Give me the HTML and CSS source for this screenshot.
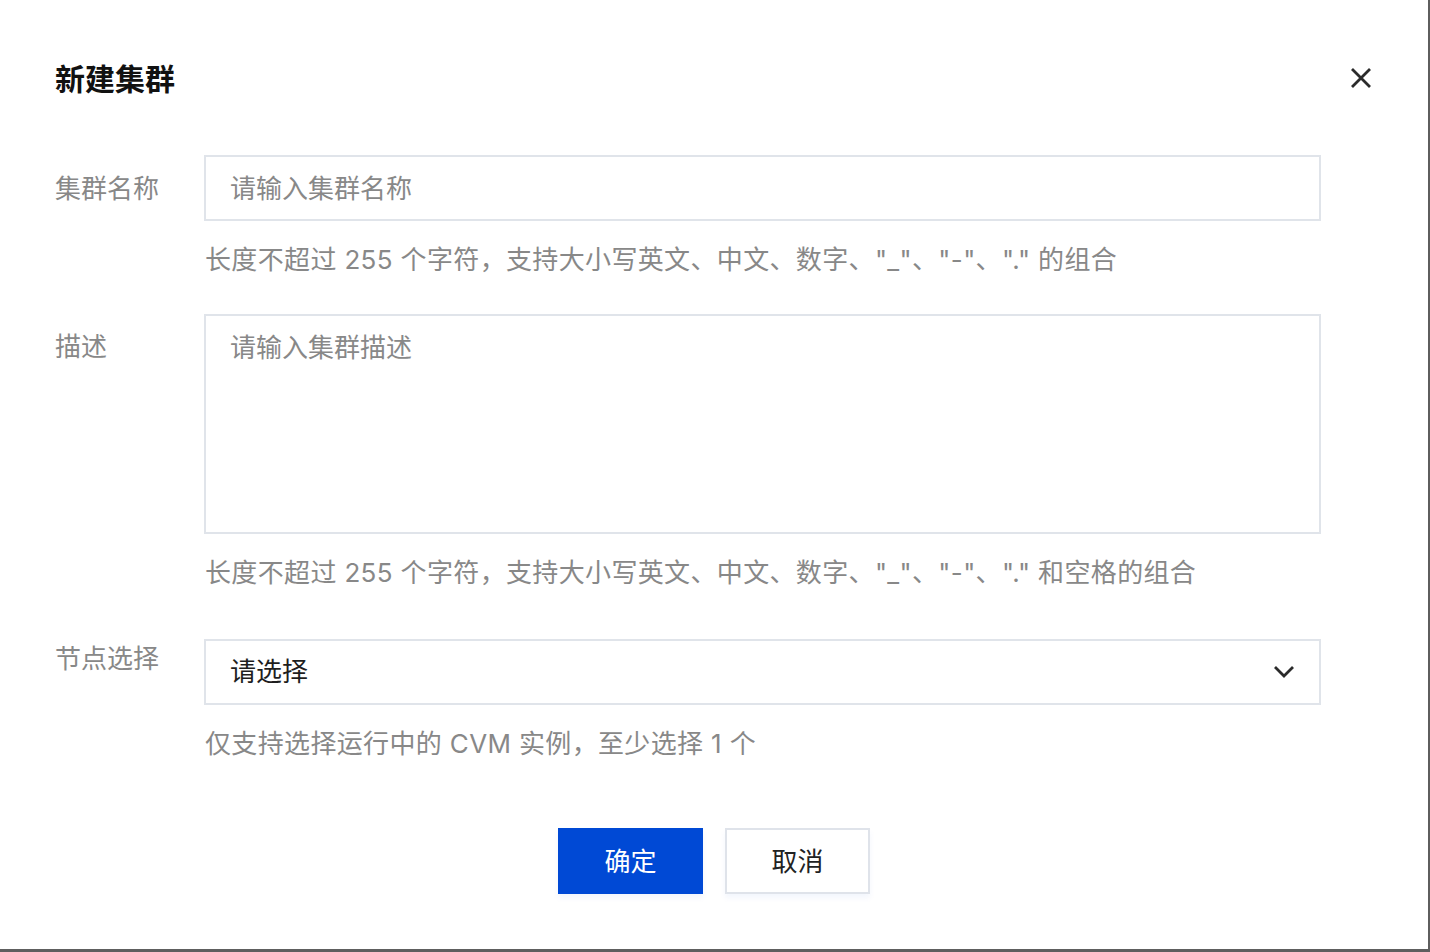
FILE: index.html
```html
<!DOCTYPE html>
<html lang="zh-CN">
<head>
    <meta charset="UTF-8">
    <meta name="viewport" content="width=device-width, initial-scale=1.0">
    <title>新建集群</title>
    <link rel="stylesheet" href="styles.css">
</head>
<body>
    <div class="dialog">
        <div class="dialog-header">
            <h1>新建集群</h1>
            <button class="close" type="button" aria-label="关闭">
                <svg width="22" height="22" viewBox="0 0 22 22">
                    <path d="M2 2 L20 20 M20 2 L2 20" stroke="#2b2b2b" stroke-width="2.8" fill="none"/>
                </svg>
            </button>
        </div>

        <form class="form">
            <label class="label" for="name">集群名称</label>
            <div class="field">
                <input type="text" id="name" class="input" placeholder="请输入集群名称">
                <p class="help">长度不超过 255 个字符，支持大小写英文、中文、数字、"_"、"-"、"." 的组合</p>
            </div>

            <label class="label label-desc" for="desc">描述</label>
            <div class="field field-desc">
                <textarea id="desc" class="textarea" placeholder="请输入集群描述"></textarea>
                <p class="help">长度不超过 255 个字符，支持大小写英文、中文、数字、"_"、"-"、"." 和空格的组合</p>
            </div>

            <label class="label label-node">节点选择</label>
            <div class="field field-node">
                <div class="select">
                    <span>请选择</span>
                    <svg width="22" height="16" viewBox="0 0 22 16">
                        <path d="M2 3 L11 12 L20 3" stroke="#2b2b2b" stroke-width="2.8" fill="none"/>
                    </svg>
                </div>
                <p class="help">仅支持选择运行中的 CVM 实例，至少选择 1 个</p>
            </div>
        </form>

        <div class="footer">
            <button type="button" class="btn btn-primary">确定</button>
            <button type="button" class="btn">取消</button>
        </div>
    </div>
</body>
</html>
```

FILE: styles.css
```css
body {
    margin: 0;
    padding: 0;
    background-color: #5e5e5e;
    font-family: Inter, "Noto Sans CJK SC", sans-serif;
}

.dialog {
    width: 1428px;
    height: 949px;
    box-sizing: border-box;
    padding: 57px 55px 0 55px;
    background-color: #fff;
}

.dialog-header {
    display: flex;
    align-items: center;
    justify-content: space-between;
    height: 44px;
    margin-bottom: 2px;
}

.dialog-header h1 {
    margin: 0;
    font-size: 30px;
    line-height: 44px;
    font-weight: bold;
    color: #111;
}

.close {
    border: none;
    background: none;
    padding: 0;
    margin: -2px 1px 0 0;
    width: 22px;
    height: 22px;
    cursor: pointer;
}

.form {
    display: grid;
    grid-template-columns: 149px 1117px;
    margin-top: 54px;
}

.label {
    margin-top: 14px;
    font-size: 26px;
    line-height: 40px;
    color: #888;
}

.label-desc {
    margin-top: 47px;
}

.field-desc {
    margin-top: 34px;
}

.label-node {
    margin-top: 46px;
}

.field-node {
    margin-top: 46px;
}

.help {
    margin: 19px 0 0 1px;
    font-size: 26px;
    line-height: 40px;
    letter-spacing: 0.35px;
    color: #888;
}

.input,
.textarea,
.select {
    display: block;
    width: 100%;
    box-sizing: border-box;
    border: 2px solid #e0e4ea;
    border-radius: 0;
    background: #fff;
    font-family: inherit;
    font-size: 26px;
    color: #222;
    padding: 0 24px;
    outline: none;
}

.input {
    height: 66px;
}

.textarea {
    height: 220px;
    padding-top: 12px;
    line-height: 40px;
    resize: none;
}

.input::placeholder,
.textarea::placeholder {
    color: #888;
}

.select {
    height: 66px;
    display: flex;
    align-items: center;
    justify-content: space-between;
    padding-right: 24px;
    color: #1e1e1e;
}

.select span {
    margin-top: -5px;
}

.footer {
    display: flex;
    justify-content: center;
    gap: 22px;
    margin-top: 64px;
}

.btn {
    width: 145px;
    height: 66px;
    padding: 0 0 3px;
    border: 2px solid #dfe3ea;
    background-color: #fff;
    color: #222;
    font-family: inherit;
    font-size: 26px;
    cursor: pointer;
    box-shadow: 0 4px 6px rgba(0, 82, 217, 0.05);
}

.btn-primary {
    border: none;
    background-color: #0049d5;
    color: #fff;
}
```
